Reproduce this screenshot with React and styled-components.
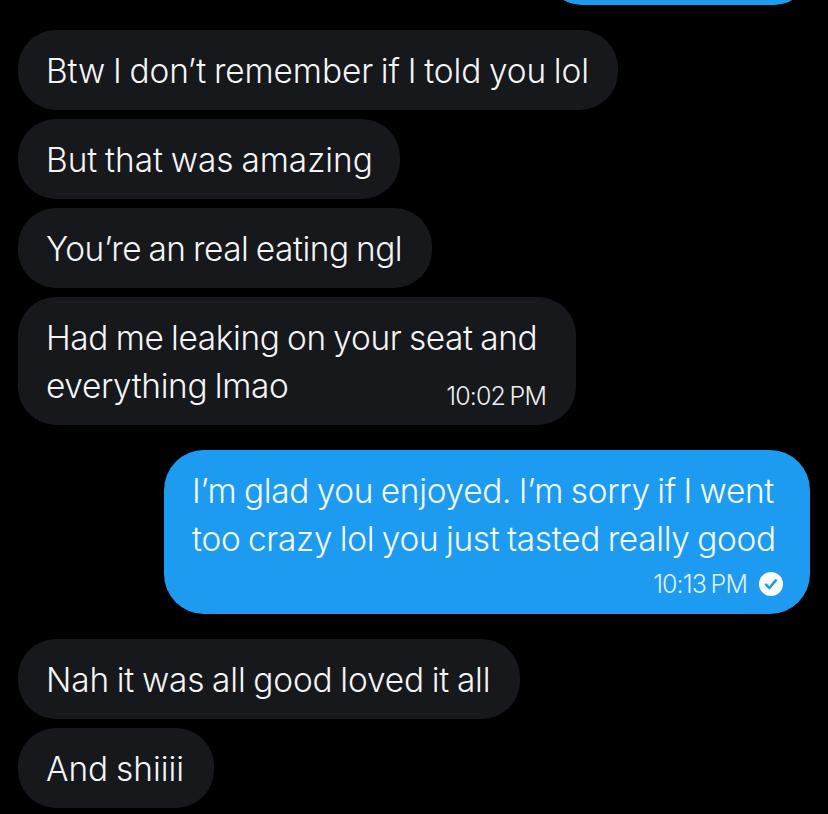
import React from 'react';
import styled, { createGlobalStyle } from 'styled-components';

const Global = createGlobalStyle`
  html, body { margin: 0; padding: 0; background: #000; }
  body { font-family: Inter, "Liberation Sans", sans-serif; }
`;

const Page = styled.main`
  width: 828px;
  height: 814px;
  overflow: hidden;
  background: #000;
  display: flex;
  flex-direction: column;
  padding: 0 18px;
  box-sizing: border-box;
`;

const TailClip = styled.div`
  flex: none;
  align-self: flex-end;
  display: flex;
  align-items: flex-end;
  height: 5px;
  overflow: hidden;
  margin-bottom: 25px;
`;

const TailBubble = styled.div`
  flex: none;
  width: 264px;
  height: 80px;
  background: #1d9bf0;
  border-radius: 36px;
`;

const Group = styled.section`
  flex: none;
  display: flex;
  flex-direction: column;
  align-items: flex-start;
  gap: 9px;
  margin-bottom: 25px;
`;

const Bubble = styled.div`
  box-sizing: border-box;
  padding: 17px 28px 15px;
  min-height: 80px;
  border-radius: 38px;
  background: #16181c;
  color: #f4f5f6;
  font-size: 33.4px;
  font-weight: 300;
  line-height: 48px;
  letter-spacing: ${p => p.$track}px;
  word-spacing: -1.5px;
  white-space: nowrap;
  width: ${p => p.$w}px;
`;

const LastLine = styled.div`
  display: flex;
  justify-content: space-between;
  align-items: flex-end;
`;

const Time = styled.span`
  font-size: 25px;
  line-height: 24px;
  letter-spacing: -0.9px;
  word-spacing: -1.5px;
  color: ${p => (p.$sent ? '#dff1fd' : '#eceef0')};
`;

const ReceivedTime = styled(Time)`
  margin-bottom: 2px;
  margin-right: 2px;
`;

const Sent = styled.div`
  flex: none;
  box-sizing: border-box;
  align-self: flex-end;
  width: 646px;
  height: 164px;
  padding: 17px 28px 0;
  background: #1d9bf0;
  color: #f6fbfe;
  border-radius: 40px;
  font-size: 33.4px;
  font-weight: 300;
  line-height: 48px;
  letter-spacing: -0.3px;
  word-spacing: -1.5px;
  white-space: nowrap;
  margin-bottom: 25px;
`;

const SentMeta = styled.div`
  display: flex;
  justify-content: flex-end;
  align-items: center;
  gap: 12px;
  margin-top: 9px;
  margin-right: -1px;
`;

const Check = styled.svg`
  width: 24px;
  height: 24px;
  flex: none;
`;

export default function App() {
  return (
    <>
      <Global />
      <Page>
        <TailClip><TailBubble /></TailClip>
        <Group>
          <Bubble $w={600} $track={-0.1}>Btw I don’t remember if I told you lol</Bubble>
          <Bubble $w={382} $track={-0.02}>But that was amazing</Bubble>
          <Bubble $w={414} $track={-0.46}>You’re an real eating ngl</Bubble>
          <Bubble $w={558} $track={-0.35}>
            Had me leaking on your seat and
            <LastLine>
              <span>everything lmao</span>
              <ReceivedTime>10:02 PM</ReceivedTime>
            </LastLine>
          </Bubble>
        </Group>
        <Sent>
          I’m glad you enjoyed. I’m sorry if I went
          <br />
          too crazy lol you just tasted really good
          <SentMeta>
            <Time $sent>10:13 PM</Time>
            <Check viewBox="0 0 24 24" aria-hidden="true">
              <circle cx="12" cy="12" r="12" fill="#fff" />
              <path d="M7 12.6l3.4 3.4 6.4-7.6" fill="none" stroke="#1d9bf0" strokeWidth="2.6" strokeLinecap="round" strokeLinejoin="round" />
            </Check>
          </SentMeta>
        </Sent>
        <Group>
          <Bubble $w={502} $track={-0.14}>Nah it was all good loved it all</Bubble>
          <Bubble $w={196} $track={-0.02}>And shiiii</Bubble>
        </Group>
      </Page>
    </>
  );
}
